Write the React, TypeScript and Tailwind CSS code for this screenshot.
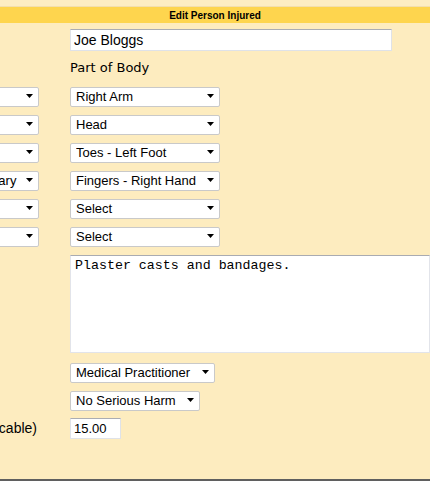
import type { ReactNode } from 'react'

const Arrow = () => (
  <svg width="7" height="4" viewBox="0 0 7 4" className="pointer-events-none absolute right-[6px] top-1/2 -translate-y-1/2">
    <polygon points="0,0 7,0 3.5,4" fill="#000" />
  </svg>
)

const Select = ({ value, width }: { value: string; width: string }) => (
  <div className={`relative shrink-0 ${width}`}>
    <select
      defaultValue={value}
      className="h-[20px] w-full appearance-none rounded-[2px] border border-[#c9c9c9] bg-white pl-[5px] pr-[16px] text-[13px] leading-[18px] text-black outline-none font-['Liberation_Sans',Arial,sans-serif]"
    >
      <option>{value}</option>
    </select>
    <Arrow />
  </div>
)

const Row = ({ left, children, className = 'h-[28px]' }: { left?: ReactNode; children: ReactNode; className?: string }) => (
  <div className={`flex items-center ${className}`}>
    <div className="flex w-[39px] shrink-0 justify-end overflow-hidden whitespace-nowrap">{left}</div>
    <div className="ml-[31px] flex min-w-0 items-center">{children}</div>
  </div>
)

const injuries = [
  ['Select', 'Right Arm'],
  ['Select', 'Head'],
  ['Select', 'Toes - Left Foot'],
  ['Temporary', 'Fingers - Right Hand'],
  ['Select', 'Select'],
  ['Select', 'Select'],
]

export default function App() {
  return (
    <div className="flex h-[481px] w-[430px] flex-col overflow-hidden bg-[#fdecbf] font-['Liberation_Sans',Arial,sans-serif] text-black">
      <div className="h-[7px] shrink-0 border-b border-[#f3dfae] bg-[#fdedc3]" />
      <div className="flex h-[16px] shrink-0 items-center justify-center bg-[#fed54e] text-[10px] font-bold">
        Edit Person Injured
      </div>

      <div className="flex-1 pt-[3px]">
        <Row>
          <input
            defaultValue="Joe Bloggs"
            className="h-[22px] w-[322px] border border-[#dfe2e8] border-t-[#abadb3] bg-white px-[3px] text-[14px] outline-none"
          />
        </Row>
        <Row>
          <span className="text-[13px] font-['DejaVu_Sans',Verdana,sans-serif]">Part of Body</span>
        </Row>

        {injuries.map(([type, part], i) => (
          <Row key={i} left={<Select value={type} width="w-[90px]" />}>
            <Select value={part} width="w-[150px]" />
          </Row>
        ))}

        <Row className="h-[108px]">
          <textarea
            defaultValue="Plaster casts and bandages."
            className="h-[98px] w-[400px] resize-none border border-[#e2e4ea] border-t-[#a9abb1] bg-white px-[4px] pt-[2px] text-[13.3px] leading-[16px] outline-none font-['Liberation_Mono','Courier_New',monospace]"
          />
        </Row>
        <Row>
          <Select value="Medical Practitioner" width="w-[145px]" />
        </Row>
        <Row>
          <Select value="No Serious Harm" width="w-[130px]" />
        </Row>
        <Row left={<span className="pr-[2px] text-[14px]">Cost (if applicable)</span>}>
          <input
            defaultValue="15.00"
            className="h-[21px] w-[51px] border border-[#dfe2e8] border-t-[#abadb3] bg-white px-[3px] text-[13px] outline-none"
          />
        </Row>
      </div>

      <div className="h-[2px] shrink-0 bg-[#5f5f5f]" />
    </div>
  )
}
